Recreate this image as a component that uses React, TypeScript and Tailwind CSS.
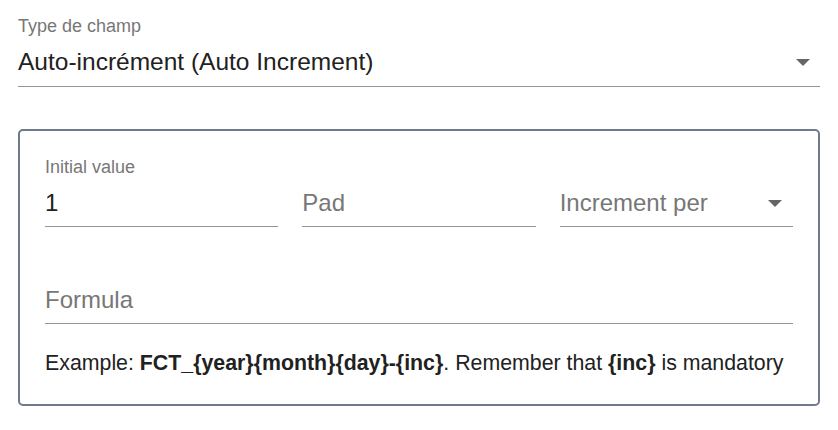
import React from "react";

function Arrow() {
  return (
    <svg width="14" height="7" viewBox="0 0 14 7" className="shrink-0">
      <polygon points="0,0 14,0 7,7" fill="#666666" />
    </svg>
  );
}

export default function App() {
  const font = { fontFamily: '"Liberation Sans", Arial, sans-serif' };
  return (
    <div className="w-[838px] h-[430px] bg-white px-[18px] pt-[16px]" style={font}>
      <div className="text-[18px] leading-[20px] text-[#777777]">Type de champ</div>
      <div className="mt-[11px] flex items-center justify-between border-b border-[#949494] pb-[9px] pr-[10px]">
        <span className="text-[24.5px] leading-[30px] text-[#212121]">Auto-incrément (Auto Increment)</span>
        <Arrow />
      </div>

      <div className="mt-[42px] rounded-[5px] border-2 border-[#6f7a8c] px-[25px] pt-[26px] pb-[29px]">
        <div className="grid grid-cols-3 gap-x-6 items-end">
          <div>
            <div className="text-[18px] leading-[20px] text-[#777777]">Initial value</div>
            <div className="mt-[12px] border-b border-[#949494] pb-[9px] text-[24px] leading-[28px] text-[#212121]">1</div>
          </div>
          <div>
            <div className="border-b border-[#949494] pb-[9px] text-[24px] leading-[28px] text-[#777777]">Pad</div>
          </div>
          <div>
            <div className="flex items-center justify-between border-b border-[#949494] pb-[9px] pr-[11px]">
              <span className="text-[24px] leading-[28px] text-[#777777]">Increment per</span>
              <Arrow />
            </div>
          </div>
        </div>

        <div className="mt-[59px] border-b border-[#949494] pb-[9px] text-[24px] leading-[28px] text-[#777777]">Formula</div>

        <div className="mt-[27px] text-[21.33px] leading-[24px] text-[#212121] whitespace-nowrap">
          Example: <b className="font-bold">FCT_{"{year}{month}{day}-{inc}"}</b>. Remember that <b className="font-bold">{"{inc}"}</b> is mandatory
        </div>
      </div>
    </div>
  );
}
